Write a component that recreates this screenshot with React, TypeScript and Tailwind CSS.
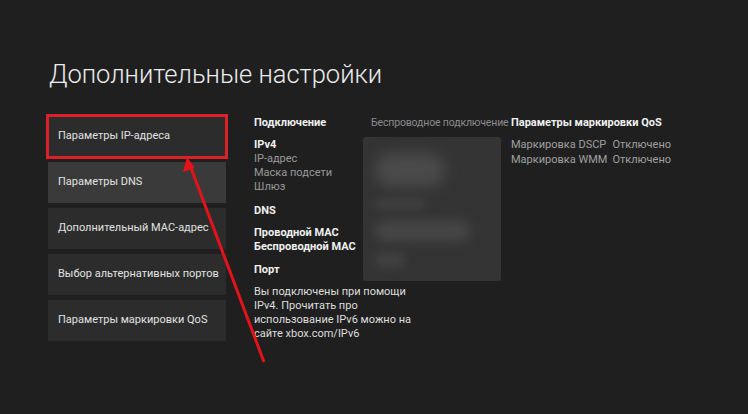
const menuItems = [
  "Параметры IP-адреса",
  "Параметры DNS",
  "Дополнительный MAC-адрес",
  "Выбор альтернативных портов",
  "Параметры маркировки QoS",
];

function BlurredDetails() {
  // the real addresses are blurred out in the screenshot
  return (
    <div className="w-[138px] h-[144px] rounded-[3px] bg-[#343434] overflow-hidden flex flex-col gap-3 pt-4 pl-3">
      <div className="w-[70px] h-[34px] bg-[#4a4a4a] rounded-full blur-[7px]" />
      <div className="w-[50px] h-[10px] bg-[#424242] rounded-full blur-[5px]" />
      <div className="w-[95px] h-[20px] bg-[#474747] rounded-full blur-[6px]" />
      <div className="w-[30px] h-[14px] bg-[#424242] rounded-full blur-[5px]" />
    </div>
  );
}

export default function App() {
  return (
    <div
      className="relative w-[748px] h-[414px] overflow-hidden bg-[#1f1f1f] text-[#e6e6e6]"
      style={{ fontFamily: 'Roboto, "Noto Sans", sans-serif' }}
    >
      <h1 className="pt-[54px] pl-[49px] text-[25.5px] leading-[40px] font-light text-[#ececec]">
        Дополнительные настройки
      </h1>

      <div className="flex mt-[22px] pl-[48px]">
        {/* Left menu */}
        <div className="flex flex-col gap-[5px] w-[178px]">
          {menuItems.map((label, i) => (
            <div
              key={label}
              className={`h-[41px] flex items-center px-[10px] text-[11px] text-[#e2e2e2] whitespace-nowrap ${
                i === 1 ? "bg-[#3a3a3a]" : "bg-[#2c2c2c]"
              } ${i === 0 ? "outline-[3px] outline-solid outline-[#dc1f28] -outline-offset-1" : ""}`}
            >
              {label}
            </div>
          ))}
        </div>

        {/* Details */}
        <div className="ml-[28px] grid grid-cols-[109px_148px_auto] text-[11px] leading-[14px]">
          <div className="font-bold text-[#f0f0f0]">Подключение</div>
          <div className="pl-2 text-[10.5px] tracking-[-0.15px] text-[#8c8c8c] whitespace-nowrap">
            Беспроводное подключение
          </div>
          <div className="font-bold text-[#f0f0f0] whitespace-nowrap">Параметры маркировки QoS</div>

          <div className="mt-[7px] pt-[1px] flex flex-col">
            <div className="font-bold text-[#f0f0f0]">IPv4</div>
            <div className="text-[#9a9a9a]">IP-адрес</div>
            <div className="text-[#9a9a9a]">Маска подсети</div>
            <div className="text-[#9a9a9a]">Шлюз</div>
            <div className="mt-[10px] font-bold text-[#f0f0f0]">DNS</div>
            <div className="mt-[8px] font-bold text-[#f0f0f0] whitespace-nowrap">Проводной MAC</div>
            <div className="font-bold text-[#f0f0f0] whitespace-nowrap">Беспроводной MAC</div>
            <div className="mt-[9px] font-bold text-[#f0f0f0]">Порт</div>
          </div>
          <div className="mt-[7px]">
            <BlurredDetails />
          </div>
          <div className="mt-[7px] grid grid-cols-[auto_auto] gap-x-[5px] content-start justify-start text-[#a0a0a0] leading-[15px] whitespace-nowrap">
            <div>Маркировка DSCP</div>
            <div>Отключено</div>
            <div>Маркировка WMM</div>
            <div>Отключено</div>
          </div>

          <p className="col-span-2 mt-[3px] text-[#dedede] whitespace-nowrap">
            Вы подключены при помощи
            <br />
            IPv4. Прочитать про
            <br />
            использование IPv6 можно на
            <br />
            сайте xbox.com/IPv6
          </p>
        </div>
      </div>

      {/* red annotation arrow */}
      <svg className="absolute inset-0 pointer-events-none" width="748" height="414" viewBox="0 0 748 414">
        <line x1="264" y1="362" x2="191" y2="168" stroke="#e3121b" strokeWidth="3" />
        <polygon points="187,157 183,172 195,168" fill="#e3121b" />
      </svg>
    </div>
  );
}
